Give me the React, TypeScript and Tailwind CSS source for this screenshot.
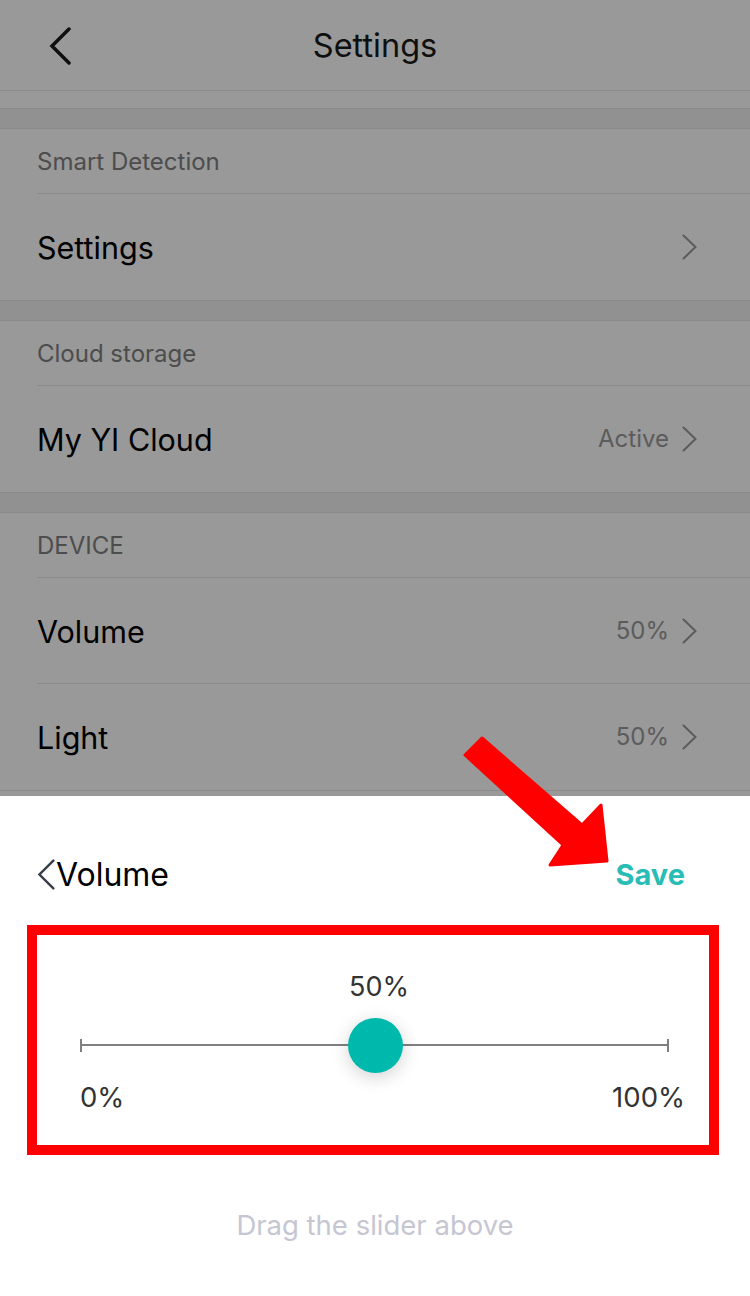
import React from 'react';

/* ── Small chevron drawings ─────────────────────────────────────────── */
const ChevronLeft = ({ className, stroke = 3.5 }: { className?: string; stroke?: number }) => (
    <svg viewBox="0 0 22 38" className={className} fill="none">
        <path d="M20 2 L3 19 L20 36" stroke="currentColor" strokeWidth={stroke} strokeLinecap="round" strokeLinejoin="miter" />
    </svg>
);

const ChevronRight = () => (
    <svg viewBox="0 0 15 26" className="w-[15px] h-[26px] text-[#999999]" fill="none">
        <path d="M1.5 1.5 L13.5 13 L1.5 24.5" stroke="currentColor" strokeWidth={2} strokeLinecap="round" />
    </svg>
);

const SectionTitle = ({ children }: { children: React.ReactNode }) => (
    <div className="h-[65px] pl-[37px] flex items-center">
        <div className="flex-1 h-full flex items-center border-b border-[#e6e6e6] text-[24px] text-[#808080] pt-[2px]">
            {children}
        </div>
    </div>
);

const Row = ({ label, value, divider = false }: { label: string; value?: string; divider?: boolean }) => (
    <div className="h-[106px] pl-[37px]">
        <div className={`h-full flex items-center pr-[53px] ${divider ? 'border-b border-[#e6e6e6]' : ''}`}>
            <span className="flex-1 text-[30.5px] text-black pt-[2px]">{label}</span>
            {value && <span className="text-[24px] text-[#999999] mr-[13px]">{value}</span>}
            <ChevronRight />
        </div>
    </div>
);

const Gap = () => <div className="h-[21px] bg-[#f2f2f2] border-y border-[#e6e6e6]" />;

export default function App() {
    return (
        <div className="relative w-[750px] h-[1296px] overflow-hidden bg-white font-['Inter',sans-serif]">
            {/* Dimmed settings page */}
            <div className="relative h-[796px] overflow-hidden">
                <header className="h-[91px] relative flex items-center justify-center border-b border-[#e6e6e6]">
                    <ChevronLeft className="absolute left-[49px] top-[27px] w-[22px] h-[38px] text-[#1a1a1a]" />
                    <h1 className="text-[32.5px] text-[#1a1a1a] pt-[2px]">Settings</h1>
                </header>
                <div className="h-[17px]" />
                <Gap />

                <SectionTitle>Smart Detection</SectionTitle>
                <Row label="Settings" />
                <Gap />

                <SectionTitle>Cloud storage</SectionTitle>
                <Row label="My YI Cloud" value="Active" />
                <Gap />

                <SectionTitle>DEVICE</SectionTitle>
                <Row label="Volume" value="50%" divider />
                <Row label="Light" value="50%" />
                <div className="border-t border-[#e6e6e6]" />

                <div className="absolute inset-0 bg-black/40" />
            </div>

            {/* Bottom sheet */}
            <div className="h-[500px] bg-white">
                <div className="h-[129px] flex items-center pl-[37px] pr-[65px] pt-[28px]">
                    <ChevronLeft className="w-[18px] h-[31px] text-[#373d49]" stroke={3} />
                    <span className="flex-1 ml-[1px] text-[32px] text-black">Volume</span>
                    <span className="text-[29px] font-bold text-[#2abdb6]">Save</span>
                </div>

                <div className="ml-[27px] w-[692px] h-[230px] border-[10px] border-[#ff0000] flex flex-col">
                    <div className="mt-[37px] text-center text-[27px] text-[#333333] pl-[12px] leading-[30px]">50%</div>
                    <div className="relative mt-[35px] ml-[43px] mr-[40px] h-[16px] flex items-center">
                        <div className="w-[2px] h-[13px] bg-[#808080]" />
                        <div className="flex-1 h-[2px] bg-[#808080]" />
                        <div className="w-[2px] h-[13px] bg-[#808080]" />
                        <div className="absolute left-[268px] top-[-19px] w-[55px] h-[55px] rounded-full bg-[#00b9ad] shadow-[0_4px_18px_rgba(0,0,0,0.18)]" />
                    </div>
                    <div className="mt-[29px] ml-[43px] mr-[24px] flex justify-between text-[27.5px] text-[#333333] leading-[30px]">
                        <span>0%</span>
                        <span>100%</span>
                    </div>
                </div>

                <div className="mt-[50px] text-center text-[27.5px] text-[#c6c6d2]">Drag the slider above</div>
            </div>

            {/* Annotation arrow */}
            <svg className="absolute inset-0 w-[750px] h-[1296px] pointer-events-none" viewBox="0 0 750 1296">
                <polygon
                    points="465,755 482,738 582,825 601,805 607,861 550,865 563,845"
                    fill="#ff0000"
                    stroke="#ff0000"
                    strokeWidth={3}
                    strokeLinejoin="round"
                />
            </svg>
        </div>
    );
}
